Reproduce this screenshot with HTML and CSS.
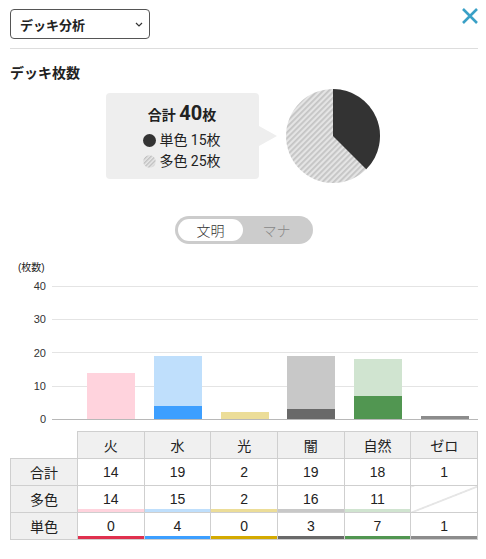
FILE: index.html
```html
<!DOCTYPE html>
<html lang="ja">
<head>
<meta charset="utf-8">
<link rel="stylesheet" href="styles.css">
</head>
<body>
<div class="page">
  <header class="header">
    <div class="select">
      <span class="select-label">デッキ分析</span>
      <svg class="chev" width="8" height="5" viewBox="0 0 8 5"><path d="M1 1 L4 4 L7 1" fill="none" stroke="#333" stroke-width="1.2"/></svg>
    </div>
    <svg class="close" width="18" height="18" viewBox="0 0 18 18"><path d="M2 2 L16 16 M16 2 L2 16" stroke="#3aa0c6" stroke-width="2.6" stroke-linecap="butt"/></svg>
  </header>
  <div class="rule"></div>
  <h2 class="title">デッキ枚数</h2>

  <div class="summary">
    <div class="tip">
      <div class="tip-total">合計 <span class="big">40</span>枚</div>
      <div class="tip-line"><span class="dot dot-mono"></span>単色 15枚</div>
      <div class="tip-line"><svg class="dot-svg" width="13" height="13" viewBox="0 0 13 13"><defs><pattern id="h2" width="3" height="3" patternUnits="userSpaceOnUse" patternTransform="rotate(45)"><rect width="3" height="3" fill="#e6e6e6"/><rect width="1.3" height="3" fill="#bdbdbd"/></pattern></defs><circle cx="6.5" cy="6.5" r="6.2" fill="url(#h2)"/></svg>多色 25枚</div>
    </div>
    <div class="tip-arrow"></div>
    <svg class="pie" width="96" height="96" viewBox="0 0 96 96">
      <defs>
        <pattern id="hatch" width="4" height="4" patternUnits="userSpaceOnUse" patternTransform="rotate(45)">
          <rect width="4" height="4" fill="#e4e4e4"/>
          <rect width="1.8" height="4" fill="#c4c4c4"/>
        </pattern>
      </defs>
      <circle cx="48" cy="48" r="47" fill="url(#hatch)"/>
      <path d="M48 48 L48 1 A47 47 0 0 1 81.23 81.23 Z" fill="#333333"/>
    </svg>
  </div>

  <div class="toggle-row">
    <div class="toggle">
      <span class="tg tg-on">文明</span>
      <span class="tg tg-off">マナ</span>
    </div>
  </div>

  <div class="chart">
    <div class="unit">(枚数)</div>
    <div class="chart-body">
      <div class="yaxis">
        <span>40</span><span>30</span><span>20</span><span>10</span><span>0</span>
      </div>
      <div class="plot">
        <div class="col"><div class="bar"><div class="seg fire-l" style="height:46.5px"></div></div></div>
        <div class="col"><div class="bar"><div class="seg water-l" style="height:49.9px"></div><div class="seg water-d" style="height:13.3px"></div></div></div>
        <div class="col"><div class="bar"><div class="seg light-l" style="height:6.6px"></div></div></div>
        <div class="col"><div class="bar"><div class="seg dark-l" style="height:53.2px"></div><div class="seg dark-d" style="height:10px"></div></div></div>
        <div class="col"><div class="bar"><div class="seg nature-l" style="height:36.6px"></div><div class="seg nature-d" style="height:23.3px"></div></div></div>
        <div class="col"><div class="bar"><div class="seg zero-d" style="height:3.3px"></div></div></div>
      </div>
    </div>
  </div>

  <table class="table">
    <thead>
      <tr><th class="corner"></th><th>火</th><th>水</th><th>光</th><th>闇</th><th>自然</th><th>ゼロ</th></tr>
    </thead>
    <tbody>
      <tr><th>合計</th><td>14</td><td>19</td><td>2</td><td>19</td><td>18</td><td>1</td></tr>
      <tr><th>多色</th><td class="fire-lu">14</td><td class="water-lu">15</td><td class="light-lu">2</td><td class="dark-lu">16</td><td class="nature-lu">11</td><td class="diag"></td></tr>
      <tr><th>単色</th><td class="fire-du">0</td><td class="water-du">4</td><td class="light-du">0</td><td class="dark-du">3</td><td class="nature-du">7</td><td class="zero-du">1</td></tr>
    </tbody>
  </table>
</div>
</body>
</html>
```

FILE: styles.css
```css
* { box-sizing: border-box; }
html, body { margin: 0; padding: 0; background: #fff; }
body {
  font-family: "Liberation Sans", "Noto Sans CJK JP", sans-serif;
  color: #222;
}
.page { width: 486px; padding: 0 8px 0 10px; }

.header {
  display: flex;
  justify-content: space-between;
  align-items: flex-start;
  padding-top: 9px;
  height: 39px;
}
.select {
  width: 140px;
  height: 30px;
  border: 1px solid #555;
  border-radius: 4px;
  display: flex;
  align-items: center;
  justify-content: space-between;
  padding: 0 6px 0 9px;
}
.select-label {
  font-family: "Noto Sans CJK JP", sans-serif;
  font-weight: 700;
  font-size: 13px;
  color: #222;
}
.chev { margin-top: 1px; }
.close { margin-top: -2px; margin-right: -1px; }

.rule { height: 1px; background: #dddddd; margin-top: 9px; }

.title {
  margin: 13px 0 0;
  font-family: "Noto Sans CJK JP", sans-serif;
  font-size: 14px;
  font-weight: 700;
  line-height: 20px;
  color: #222;
}

.summary {
  margin-top: 6px;
  display: flex;
  align-items: center;
  justify-content: center;
  height: 96px;
  padding-right: 2px;
}
.tip {
  width: 153px;
  height: 86px;
  background: #eeeeee;
  border-radius: 4px;
  padding-top: 6px;
  text-align: center;
  font-family: "Roboto", "Noto Sans CJK JP", sans-serif;
}
.tip-total {
  font-family: "Roboto", "Noto Sans CJK JP", sans-serif;
  font-weight: 700;
  font-size: 14px;
  line-height: 28px;
  color: #222;
}
.tip-total .big { font-size: 20px; }
.tip-line {
  font-size: 14px;
  line-height: 20px;
  color: #222;
  display: flex;
  align-items: center;
  justify-content: center;
  gap: 3px;
  margin-top: 1px;
}
.dot {
  display: inline-block;
  width: 13px;
  height: 13px;
  border-radius: 50%;
}
.dot-mono { background: #333; }
.dot-svg { display: block; }
.tip-arrow {
  width: 0;
  height: 0;
  border-top: 10px solid transparent;
  border-bottom: 10px solid transparent;
  border-left: 18px solid #eeeeee;
}
.pie { margin-left: 8px; display: block; }

.toggle-row {
  display: flex;
  justify-content: center;
  margin-top: 32px;
}
.toggle {
  width: 138px;
  height: 28px;
  border-radius: 14px;
  background: #cccccc;
  display: flex;
  align-items: center;
  padding: 3px;
}
.tg {
  height: 22px;
  line-height: 22px;
  font-size: 14px;
  font-weight: 300;
  font-family: "Noto Sans CJK JP", sans-serif;
  text-align: center;
}
.tg-on {
  width: 65px;
  background: #fff;
  border-radius: 11px;
  color: #333;
}
.tg-off { flex: 1; color: #888; }

.chart { margin-top: 19px; }
.unit {
  font-size: 10px;
  line-height: 10px;
  height: 10px;
  padding-left: 8px;
  color: #222;
  font-family: "Liberation Sans", "Noto Sans CJK JP", sans-serif;
}
.chart-body {
  display: flex;
  align-items: flex-start;
  margin-top: 13px;
}
.yaxis {
  width: 42px;
  height: 146px;
  margin: -6px 0 -11px;
  display: flex;
  flex-direction: column;
  justify-content: space-between;
  align-items: flex-end;
  padding-right: 6px;
  font-size: 11px;
  line-height: 13px;
  color: #333;
}
.plot {
  width: 426px;
  height: 134px;
  padding-left: 26px;
  display: grid;
  grid-template-columns: repeat(6, 1fr);
  background: repeating-linear-gradient(to bottom, #e4e4e4 0, #e4e4e4 1px, transparent 1px, transparent 33.25px);
  border-bottom: 1px solid #b8b8b8;
}
.col {
  display: flex;
  justify-content: center;
  align-items: flex-end;
}
.bar { width: 48px; display: flex; flex-direction: column; }
.fire-l { background: #ffd3dd; }
.water-l { background: #bfdffc; }
.water-d { background: #3d9fff; }
.light-l { background: #ecdd98; }
.dark-l { background: #c8c8c8; }
.dark-d { background: #696969; }
.nature-l { background: #d0e4d0; }
.nature-d { background: #519651; }
.zero-d { background: #8c8c8c; }

.table {
  margin-top: 11px;
  border-collapse: collapse;
  width: 468px;
  table-layout: fixed;
  font-size: 14px;
  font-family: "Liberation Sans", "Noto Sans CJK JP", sans-serif;
}
.table th, .table td {
  border: 1px solid #cfcfcf;
  height: 27px;
  padding: 0;
  text-align: center;
  font-weight: 400;
  color: #222;
}
.table th { background: #f0f0f0; font-family: "Noto Sans CJK JP", sans-serif; }
.table th.corner { background: #fff; border-top: none; border-left: none; width: 67px; }
.table td { background: #fff; }
.fire-lu { box-shadow: inset 0 -3px 0 #ffd3dd; }
.water-lu { box-shadow: inset 0 -3px 0 #bfdffc; }
.light-lu { box-shadow: inset 0 -3px 0 #ecdd98; }
.dark-lu { box-shadow: inset 0 -3px 0 #c8c8c8; }
.nature-lu { box-shadow: inset 0 -3px 0 #d0e4d0; }
.fire-du { box-shadow: inset 0 -3px 0 #e0304e; }
.water-du { box-shadow: inset 0 -3px 0 #3d9fff; }
.light-du { box-shadow: inset 0 -3px 0 #d4aa00; }
.dark-du { box-shadow: inset 0 -3px 0 #696969; }
.nature-du { box-shadow: inset 0 -3px 0 #519651; }
.zero-du { box-shadow: inset 0 -3px 0 #8c8c8c; }
.table td.diag {
  background: linear-gradient(to bottom right, #fff calc(50% - 0.8px), #c4c4c4 50%, #fff calc(50% + 0.8px));
}
```
